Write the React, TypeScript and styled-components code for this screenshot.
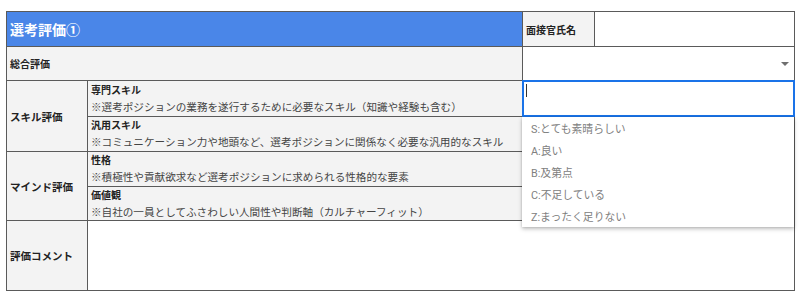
import React from 'react';
import styled, { createGlobalStyle } from 'styled-components';

const GlobalStyle = createGlobalStyle`
  html, body {
    margin: 0;
    padding: 0;
    background: #fff;
  }
  body {
    padding: 11px 6px 0;
    font-family: "Liberation Sans", "Noto Sans CJK JP", sans-serif;
    color: #222;
  }
`;

const options = ['S:とても素晴らしい', 'A:良い', 'B:及第点', 'C:不足している', 'Z:まったく足りない'];

export default function App() {
  return (
    <>
      <GlobalStyle />
      <Wrapper>
        <Table>
          <Title>選考評価①</Title>
          <Label $shade>面接官氏名</Label>
          <Cell />

          <Label $shade $span="1 / 3">総合評価</Label>
          <SelectCell $span="3 / 5">
            <Arrow />
          </SelectCell>

          <GroupLabel $rows="3 / 5">スキル評価</GroupLabel>
          <Item>
            <ItemTitle>専門スキル</ItemTitle>
            <ItemNote>※選考ポジションの業務を遂行するために必要なスキル（知識や経験も含む）</ItemNote>
          </Item>
          <InputCell $span="3 / 5">
            <Caret />
          </InputCell>
          <Item>
            <ItemTitle>汎用スキル</ItemTitle>
            <ItemNote>※コミュニケーション力や地頭など、選考ポジションに関係なく必要な汎用的なスキル</ItemNote>
          </Item>
          <Cell $span="3 / 5" />

          <GroupLabel $rows="5 / 7">マインド評価</GroupLabel>
          <Item>
            <ItemTitle>性格</ItemTitle>
            <ItemNote>※積極性や貢献欲求など選考ポジションに求められる性格的な要素</ItemNote>
          </Item>
          <Cell $span="3 / 5" />
          <Item>
            <ItemTitle>価値観</ItemTitle>
            <ItemNote>※自社の一員としてふさわしい人間性や判断軸（カルチャーフィット）</ItemNote>
          </Item>
          <Cell $span="3 / 5" />

          <GroupLabel>評価コメント</GroupLabel>
          <Cell $span="2 / 5" />
        </Table>

        <Menu>
          {options.map((o) => (
            <Option key={o}>{o}</Option>
          ))}
        </Menu>
      </Wrapper>
    </>
  );
}

const Wrapper = styled.div`
  position: relative;
  width: 789px;
`;

const Table = styled.div`
  display: grid;
  grid-template-columns: 80px 434px 71px 199px;
  grid-template-rows: 34px 33px 35px 34px 34px 33px 69px;
  gap: 1px;
  padding: 1px;
  background: #5a5a5a;
`;

const Cell = styled.div<{ $span?: string; $shade?: boolean }>`
  grid-column: ${(p) => p.$span || 'auto'};
  background: ${(p) => (p.$shade ? '#f3f3f3' : '#fff')};
`;

const Title = styled.div`
  grid-column: 1 / 3;
  background: #4a86e8;
  color: #fff;
  font-size: 14px;
  font-weight: bold;
  display: flex;
  align-items: center;
  padding-left: 3px;
`;

const Label = styled(Cell)`
  display: flex;
  align-items: center;
  padding-left: 3px;
  font-size: 10px;
  font-weight: bold;
  color: #222;
`;

const GroupLabel = styled.div<{ $rows?: string }>`
  grid-row: ${(p) => p.$rows || 'auto'};
  background: #f3f3f3;
  display: flex;
  align-items: center;
  padding-left: 3px;
  font-size: 10.5px;
  font-weight: bold;
  color: #222;
`;

const Item = styled.div`
  background: #f3f3f3;
  display: flex;
  flex-direction: column;
  justify-content: center;
  gap: 3px;
  padding-left: 3px;
`;

const ItemTitle = styled.div`
  font-size: 10px;
  font-weight: bold;
  color: #222;
  line-height: 13px;
`;

const ItemNote = styled.div`
  font-size: 10.6px;
  color: #444;
  line-height: 14px;
  white-space: nowrap;
`;

const SelectCell = styled(Cell)`
  display: flex;
  align-items: center;
  justify-content: flex-end;
  padding-right: 5px;
`;

const Arrow = styled.span`
  width: 0;
  height: 0;
  border-left: 4px solid transparent;
  border-right: 4px solid transparent;
  border-top: 4px solid #6f6f6f;
`;

const InputCell = styled(Cell)`
  margin: -1px;
  border: 2px solid #1a73e8;
  display: flex;
  align-items: flex-start;
  padding: 2px 0 0 2px;
`;

const Caret = styled.span`
  width: 1px;
  height: 13px;
  background: #333;
`;

const Menu = styled.div`
  position: absolute;
  left: 516px;
  top: 106px;
  width: 272px;
  background: #fff;
  box-shadow: 0 2px 4px rgba(0, 0, 0, 0.25), 0 0 2px rgba(0, 0, 0, 0.15);
  display: flex;
  flex-direction: column;
`;

const Option = styled.div`
  height: 22px;
  display: flex;
  align-items: center;
  padding-left: 9px;
  font-family: Roboto, "Noto Sans CJK JP", sans-serif;
  font-size: 10.8px;
  color: #808080;
`;
